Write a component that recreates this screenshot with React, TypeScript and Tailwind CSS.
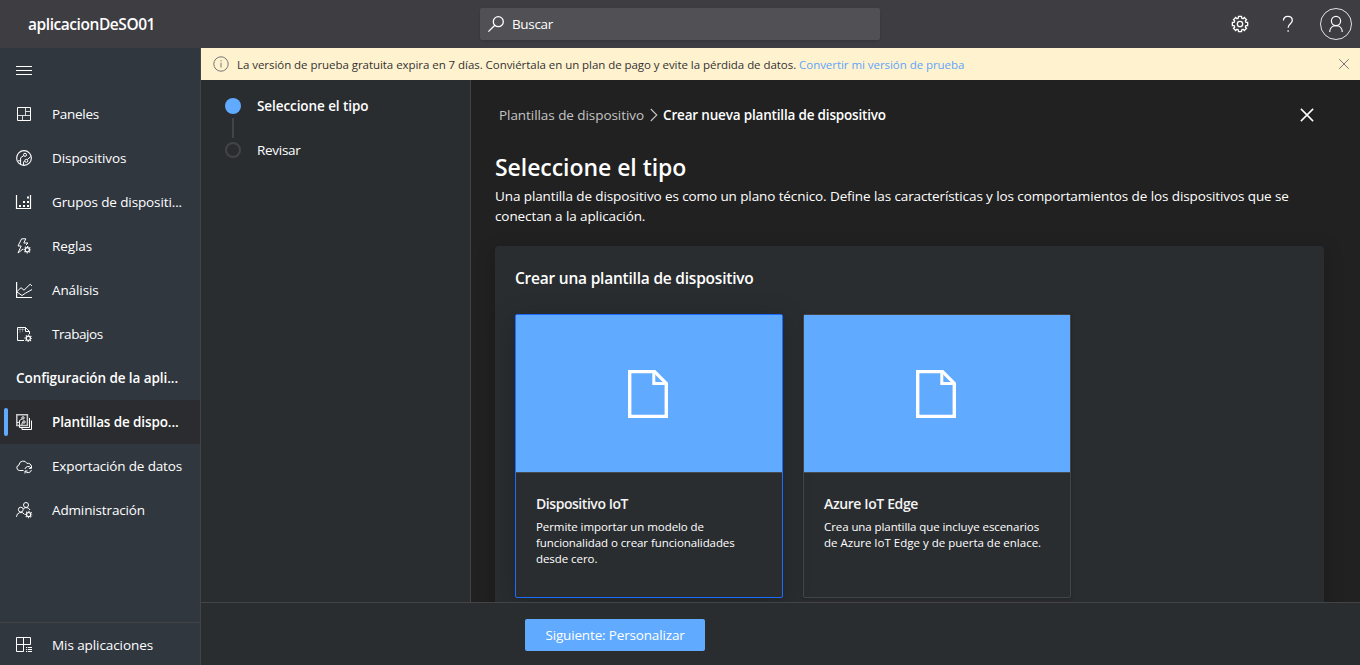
import type { ReactNode } from "react";

function gear(cx: number, cy: number, outer: number, inner: number) {
  const points: string[] = [];
  for (let i = 0; i < 8; i++) {
    const mid = (i * Math.PI) / 4;
    for (const [offset, r] of [[-0.27, inner], [-0.2, outer], [0.2, outer], [0.27, inner]]) {
      points.push(`${(cx + r * Math.sin(mid + offset)).toFixed(2)} ${(cy - r * Math.cos(mid + offset)).toFixed(2)}`);
    }
  }
  return `M${points.join("L")}Z`;
}

function Icon({ children, size = 16, sw = 1 }: { children: ReactNode; size?: number; sw?: number }) {
  return (
    <svg width={size} height={size} viewBox={`0 0 ${size} ${size}`} fill="none" stroke="currentColor" strokeWidth={sw} className="block shrink-0 overflow-visible">
      {children}
    </svg>
  );
}

const MiniGear = ({ x, y }: { x: number; y: number }) => (
  <>
    <circle cx={x} cy={y} r="2.1" strokeWidth="1.2" />
    <circle cx={x} cy={y} r="3.2" strokeWidth="1.1" strokeDasharray="1.2 1.313" strokeDashoffset="0.6" />
  </>
);

const icons: Record<string, ReactNode> = {
  paneles: (
    <Icon>
      <path d="M1.5 1.5h13v13h-13z" />
      <path d="M9.5 1.5v8M1.5 9.5h13M9.5 5.5h5M6.5 9.5v5" strokeOpacity=".8" />
    </Icon>
  ),
  dispositivos: (
    <Icon>
      <circle cx="8" cy="8" r="7.4" strokeWidth="1.1" />
      <circle cx="9" cy="4.8" r="1.5" />
      <circle cx="10.3" cy="10.8" r="1.5" />
      <path d="M7.7 5.6 4.6 7.8v6.4M2 10.8h2.6M7.6 15v-3.2l1.2-.8M11.3 9.6l3.4-3" />
    </Icon>
  ),
  grupos: (
    <Icon>
      <path d="M.5 1v13.5h14V1" strokeWidth="1.2" />
      <path d="M3 11h2v2H3zM7 11h2v2H7zM11 11h2v2h-2zM7 7h2v2H7zM11 7h2v2h-2zM11 2.5h2v2h-2z" fill="currentColor" stroke="none" />
    </Icon>
  ),
  reglas: (
    <Icon>
      <path d="M9.8.8H5.6L2 8h3.2L2 15l5-4M9.8.8 7.8 5H12L10 7" />
      <MiniGear x={11.3} y={11.7} />
    </Icon>
  ),
  analisis: (
    <Icon>
      <path d="M.6 0v15.5H16" strokeWidth="1.2" />
      <path d="m1 9.5 4-3.8 3 2.5 6.2-6L16 4M1 10l5 3.5 3.3-2.2L16 7.5" />
    </Icon>
  ),
  trabajos: (
    <Icon>
      <path d="M8 14.5H1.5v-13h8l4 4V8M9.5 1.5v4h4" />
      <path d="M2 3.5h7M4 2v5M6.5 2v4" strokeOpacity=".35" />
      <MiniGear x={12.3} y={12.3} />
    </Icon>
  ),
  plantillas: (
    <Icon>
      <path d="M.8.8h10.6v10.6H.8z" strokeWidth="1.5" strokeOpacity=".75" />
      <circle cx="7" cy="3.9" r="1.2" />
      <circle cx="8" cy="8" r="1.2" />
      <path d="M6 5 3.5 6.4v4.6M1 8.4h2.5M6 11V9l1-.5" strokeWidth=".9" />
      <path d="M13.5 4v9.5H3.5v-2M15.5 6.5v9H6v-2" />
    </Icon>
  ),
  exportacion: (
    <Icon>
      <path d="M7.5 12.5H3.3A2.8 2.8 0 0 1 3 7a4.2 4.2 0 0 1 8-1.5 3.3 3.3 0 0 1 4.4 3" />
      <path d="M9 11a3.3 3.3 0 0 1 6-1M15.5 7.8V10.4h-2.6M15.4 12a3.3 3.3 0 0 1-6 1.2M9 15.5V13h2.6" />
    </Icon>
  ),
  administracion: (
    <Icon>
      <circle cx="10" cy="3" r="2.5" />
      <circle cx="4.8" cy="7.6" r="2.4" />
      <path d="M.5 14.8a4.4 4.4 0 0 1 8-2.5M7.4 6.6A4.3 4.3 0 0 1 14 8" />
      <MiniGear x={12.6} y={12.6} />
    </Icon>
  ),
  misApps: (
    <Icon>
      <path d="M.5.5h14v7H.5zM.5 7.5v7h7V.5" />
      <path d="M10 10.5h1.2M12 10.5h4M10 12.5h1.2M12 12.5h4M10 14.5h1.2M12 14.5h4" />
    </Icon>
  ),
};

const nav = [
  { icon: "paneles", label: "Paneles", cls: "tracking-[-0.28px]" },
  { icon: "dispositivos", label: "Dispositivos", cls: "tracking-[-0.08px]" },
  { icon: "grupos", label: "Grupos de dispositi...", cls: "tracking-[-0.11px]" },
  { icon: "reglas", label: "Reglas", cls: "tracking-[-0.08px]" },
  { icon: "analisis", label: "Análisis", cls: "tracking-[-0.1px]" },
  { icon: "trabajos", label: "Trabajos", cls: "tracking-[-0.42px]" },
];
const configNav = [
  { icon: "plantillas", label: "Plantillas de dispo...", cls: "tracking-[-0.12px]", active: true },
  { icon: "exportacion", label: "Exportación de datos", cls: "tracking-[-0.15px]" },
  { icon: "administracion", label: "Administración", cls: "tracking-[-0.14px]" },
];

function NavItem({ icon, label, cls, active = false }: { icon: string; label: string; cls: string; active?: boolean }) {
  return (
    <div className={`flex h-11 items-center whitespace-nowrap ${active ? "bg-[#2a2c2f] font-semibold" : ""}`}>
      <span className={`ml-1 h-7 w-1 rounded-xs ${active ? "bg-[#60aaff]" : ""}`} />
      <span className="ml-2 w-9">{icons[icon]}</span>
      <span className={cls}>{label}</span>
    </div>
  );
}

type Line = { text: string; cls: string };

function Card({ title, lines, selected = false }: { title: Line; lines: Line[]; selected?: boolean }) {
  return (
    <div
      className={`flex h-[284px] w-[268px] flex-col rounded-xs border ${
        selected ? "border-[#1a6dff] shadow-[0_6px_28px_rgba(0,0,0,0.22)]" : "border-[#444446] shadow-[0_1px_4px_rgba(0,0,0,0.2)]"
      }`}
    >
      <div className="flex h-[158px] items-center justify-center border-b border-[#4a4a4c] bg-[#60aaff] pt-px pr-0.5">
        <svg width="40" height="48" viewBox="0 0 40 48" fill="none" stroke="currentColor" strokeWidth="3.4">
          <path d="M1.7 1.6h24.8l11.8 11.8v33H1.7z" />
          <path d="M25.8 1.6v11.8h12.5" strokeWidth="3" />
        </svg>
      </div>
      <div className="px-5 pt-[21px] whitespace-nowrap">
        <h3 className={`text-sm leading-5 font-semibold text-[#f4f4f4] ${title.cls}`}>{title.text}</h3>
        <p className="mt-[5px] text-[11.5px] leading-4">
          {lines.map((l) => (
            <span key={l.text} className={`block ${l.cls}`}>{l.text}</span>
          ))}
        </p>
      </div>
    </div>
  );
}

export default function App() {
  return (
    <div className="flex h-[665px] w-[1360px] flex-col overflow-hidden bg-[#212121] font-['Open_Sans',sans-serif] text-[13.5px] text-white">
      <header className="flex h-12 shrink-0 items-center bg-[#3e3d42]">
        <div className="w-[480px] pt-0.5 pl-7 text-[15.5px] font-semibold tracking-[-0.44px]">aplicacionDeSO01</div>
        <div className="flex h-8 w-[400px] items-center rounded-xs bg-[#515054] pl-2 shadow-sm">
          <Icon sw={1.3}><circle cx="10.3" cy="5.7" r="5" /><path d="M6.8 9.3.4 15.6" /></Icon>
          <span className="ml-2 tracking-[-0.35px]">Buscar</span>
        </div>
        <div className="ml-auto flex items-center pr-2">
          <Icon sw={1.3}><path d={gear(8, 8, 7.8, 6.1)} /><circle cx="8" cy="8" r="2.7" /></Icon>
          <svg width="12" height="18" viewBox="0 0 12 18" fill="none" stroke="currentColor" strokeWidth="1.3" className="ml-[34px]">
            <path d="M1.4 5.6C1.4 2.9 3.2 1.4 5.8 1.4s4.5 1.5 4.5 4c0 3.2-4.2 3.4-4.2 7.3M6.1 15.2v1.6" />
          </svg>
          <svg width="32" height="32" viewBox="0 0 32 32" fill="none" stroke="currentColor" className="ml-[26px]">
            <circle cx="16" cy="16" r="15.5" strokeOpacity=".85" />
            <circle cx="16" cy="13" r="4.6" strokeWidth="1.2" />
            <path d="M9.7 24c0-3.8 2.7-6.3 6.3-6.3s6.3 2.5 6.3 6.3" strokeWidth="1.2" />
          </svg>
        </div>
      </header>

      <div className="flex min-h-0 flex-1">
        <nav className="flex w-[201px] shrink-0 flex-col border-r border-[#444446] bg-[#31373f]">
          <div className="flex h-11 items-center pl-4"><Icon><path d="M0 4.5h16M0 8.5h16M0 12.5h16" /></Icon></div>
          {nav.map((n) => <NavItem key={n.label} {...n} />)}
          <div className="flex h-11 items-center pl-4 font-semibold tracking-[-0.08px]">Configuración de la apli...</div>
          {configNav.map((n) => <NavItem key={n.label} {...n} />)}
          <div className="mt-auto -mb-0.5 border-t border-[#444446]">
            <NavItem icon="misApps" label="Mis aplicaciones" cls="tracking-[-0.08px]" />
          </div>
        </nav>

        <div className="flex min-w-0 flex-1 flex-col">
          <div className="flex h-8 shrink-0 items-center bg-[#fff2cf] pr-[11px] pl-3 text-[11.5px] tracking-[-0.05px] text-[#333]">
            <svg width="16" height="16" viewBox="0 0 16 16" fill="none" stroke="#777" className="mr-2">
              <circle cx="8" cy="8" r="7.2" />
              <path d="M8 6.7v4.8M8 4.2v1.2" />
            </svg>
            <span className="pt-0.5">La versión de prueba gratuita expira en 7 días. Conviértala en un plan de pago y evite la pérdida de datos.</span>
            <span className="ml-[3px] pt-0.5 text-[#60a5fa]">Convertir mi versión de prueba</span>
            <svg width="10" height="10" viewBox="0 0 10 10" fill="none" stroke="#777" className="ml-auto"><path d="m.2.2 9.6 9.6M9.8.2.2 9.8" /></svg>
          </div>

          <div className="flex min-h-0 flex-1">
            <aside className="flex w-[270px] shrink-0 gap-4 border-r border-[#444446] bg-[#2a2d30] pt-4 pl-6">
              <div className="flex w-4 flex-col items-center gap-1 pt-0.5">
                <span className="size-4 rounded-full bg-[#60aaff]" />
                <span className="h-5 w-0.5 bg-[#444446]" />
                <span className="size-4 rounded-full border-2 border-[#444446]" />
              </div>
              <div className="leading-5">
                <div className="font-semibold tracking-[-0.08px]">Seleccione el tipo</div>
                <div className="mt-6 tracking-[-0.28px]">Revisar</div>
              </div>
            </aside>

            <main className="min-w-0 flex-1 overflow-hidden pt-[25px] pl-6 whitespace-nowrap">
              <div className="flex h-5 items-center pr-[46px] pl-1 leading-5">
                <span className="tracking-[-0.06px] text-[#c4c4c4]">Plantillas de dispositivo</span>
                <svg width="8" height="14" viewBox="0 0 8 14" fill="none" stroke="#c4c4c4" strokeWidth="1.1" className="mr-[5px] ml-1.5"><path d="m.8 1 6 6-6 6" /></svg>
                <span className="font-semibold tracking-[-0.18px]">Crear nueva plantilla de dispositivo</span>
                <svg width="14" height="14" viewBox="0 0 14 14" fill="none" stroke="currentColor" strokeWidth="1.5" className="ml-auto"><path d="m.9.9 12.2 12.2M13.1.9.9 13.1" /></svg>
              </div>
              <h1 className="mt-[26px] text-[23px] leading-8 font-semibold tracking-[-0.05px]">Seleccione el tipo</h1>
              <p className="mt-[3px] leading-5 tracking-[-0.1px]">
                Una plantilla de dispositivo es como un plano técnico. Define las características y los comportamientos de los dispositivos que se
                <br />
                conectan a la aplicación.
              </p>
              <section className="mt-5 w-[829px] rounded-t bg-[#2a2d30] px-5 pt-[22px] pb-5 shadow-[0_4px_20px_rgba(0,0,0,0.2)]">
                <h2 className="text-[15.5px] leading-5 font-semibold tracking-[-0.22px]">Crear una plantilla de dispositivo</h2>
                <div className="mt-[26px] flex gap-5">
                  <Card
                    selected
                    title={{ text: "Dispositivo IoT", cls: "tracking-[-0.45px]" }}
                    lines={[
                      { text: "Permite importar un modelo de", cls: "tracking-[-0.07px]" },
                      { text: "funcionalidad o crear funcionalidades", cls: "tracking-[-0.08px]" },
                      { text: "desde cero.", cls: "tracking-[-0.06px]" },
                    ]}
                  />
                  <Card
                    title={{ text: "Azure IoT Edge", cls: "tracking-[-0.38px]" }}
                    lines={[
                      { text: "Crea una plantilla que incluye escenarios", cls: "tracking-[-0.08px]" },
                      { text: "de Azure IoT Edge y de puerta de enlace.", cls: "tracking-normal" },
                    ]}
                  />
                </div>
              </section>
            </main>
          </div>

          <footer className="h-[63px] shrink-0 border-t border-[#444446] bg-[#2a2d30] pt-4 pl-[324px]">
            <button className="block h-8 w-[180px] rounded-xs bg-[#60aaff] tracking-[-0.16px]">Siguiente: Personalizar</button>
          </footer>
        </div>
      </div>
    </div>
  );
}
